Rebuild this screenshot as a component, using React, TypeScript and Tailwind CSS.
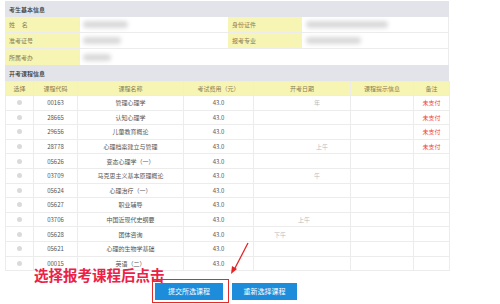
import React from 'react';

const courses = [
  { code: '00163', name: '管理心理学', date: '年', dx: 'ml-[60px]', note: true },
  { code: '28665', name: '认知心理学', date: '', dx: '', note: true },
  { code: '29656', name: '儿童教育概论', date: '', dx: '', note: true },
  { code: '28778', name: '心理档案建立与管理', date: '上午', dx: 'ml-[62px]', note: true },
  { code: '05626', name: '变态心理学（一）', date: '', dx: '', note: false },
  { code: '03709', name: '马克思主义基本原理概论', date: '午', dx: 'ml-[60px]', note: false },
  { code: '05624', name: '心理治疗（一）', date: '', dx: '', note: false },
  { code: '05627', name: '职业辅导', date: '', dx: '', note: false },
  { code: '03706', name: '中国近现代史纲要', date: '上午', dx: 'ml-[44px]', note: false },
  { code: '05628', name: '团体咨询', date: '下午', dx: 'ml-[20px]', note: false },
  { code: '05621', name: '心理的生物学基础', date: '', dx: '', note: false },
  { code: '00015', name: '英语（二）', date: '', dx: '', note: false },
];

function Blur({ w }: { w: string }) {
  return <div className={`h-[7px] ${w} rounded-full bg-[#d9d9d9] blur-[2px]`} />;
}

export default function App() {
  const font = { fontFamily: '"Noto Sans CJK SC", "Noto Sans", sans-serif' };
  return (
    <div className="relative w-[500px] h-[304px] bg-white overflow-hidden text-[6px] text-[#555]" style={font}>
      <div className="ml-[5px] pt-[1px] w-[444px]">
        {/* 考生基本信息 */}
        <div className="h-[16px] bg-[#e2e4ea] flex items-center pl-[4px] text-[#333] font-medium">考生基本信息</div>
        <div className="grid grid-cols-[75px_148px_74px_147px] border-r border-[#ececec]">
          <div className="h-[16px] bg-[#f7f5b3] flex items-center pl-[4px] text-[#8a7d55] border-b border-[#ececec]">姓&nbsp;&nbsp;&nbsp;&nbsp;&nbsp;名</div>
          <div className="h-[16px] flex items-center pl-[3px] border-b border-[#ececec]"><Blur w="w-[45px]" /></div>
          <div className="h-[16px] bg-[#f7f5b3] flex items-center pl-[4px] text-[#8a7d55] border-b border-[#ececec]">身份证件</div>
          <div className="h-[16px] flex items-center pl-[4px] border-b border-[#ececec]"><Blur w="w-[82px]" /></div>
          <div className="h-[16px] bg-[#f7f5b3] flex items-center pl-[4px] text-[#8a7d55] border-b border-[#ececec]">准考证号</div>
          <div className="h-[16px] flex items-center pl-[3px] border-b border-[#ececec]"><Blur w="w-[38px]" /></div>
          <div className="h-[16px] bg-[#f7f5b3] flex items-center pl-[4px] text-[#8a7d55] border-b border-[#ececec]">报考专业</div>
          <div className="h-[16px] flex items-center pl-[4px] border-b border-[#ececec]"><Blur w="w-[55px]" /></div>
          <div className="h-[16px] bg-[#f7f5b3] flex items-center pl-[4px] text-[#8a7d55]">所属考办</div>
          <div className="h-[16px] flex items-center pl-[3px]"><Blur w="w-[28px]" /></div>
          <div className="h-[16px]" />
          <div className="h-[16px]" />
        </div>

        {/* 开考课程信息 */}
        <div className="h-[16px] bg-[#e2e4ea] flex items-center pl-[4px] text-[#333] font-medium">开考课程信息</div>
        <table className="w-[444px] table-fixed border-collapse text-center">
          <colgroup>
            <col className="w-[28px]" />
            <col className="w-[44px]" />
            <col className="w-[106px]" />
            <col className="w-[70px]" />
            <col className="w-[97px]" />
            <col className="w-[63px]" />
            <col className="w-[36px]" />
          </colgroup>
          <thead>
            <tr className="h-[14px] bg-[#f7f5b3] text-[#8a7d55]">
              <th className="font-normal border border-[#ececec]">选择</th>
              <th className="font-normal border border-[#ececec]">课程代码</th>
              <th className="font-normal border border-[#ececec]">课程名称</th>
              <th className="font-normal border border-[#ececec]">考试费用（元）</th>
              <th className="font-normal border border-[#ececec]">开考日期</th>
              <th className="font-normal border border-[#ececec]">课程提示信息</th>
              <th className="font-normal border border-[#ececec]">备注</th>
            </tr>
          </thead>
          <tbody>
            {courses.map((c) => (
              <tr key={c.code} className="h-[14.6px]">
                <td className="border border-[#ececec]">
                  <div className="mx-auto w-[5px] h-[5px] rounded-full bg-[#dadada]" />
                </td>
                <td className="border border-[#ececec]">{c.code}</td>
                <td className="border border-[#ececec]">{c.name}</td>
                <td className="border border-[#ececec]">43.0</td>
                <td className="border border-[#ececec] text-left text-[#bbb]">
                  <span className={c.dx}>{c.date}</span>
                </td>
                <td className="border border-[#ececec]" />
                <td className="border border-[#ececec] text-[#f03c3c]">{c.note ? '未支付' : ''}</td>
              </tr>
            ))}
          </tbody>
        </table>

        <div className="flex gap-[9px] mt-[12px] ml-[150px]">
          <div className="w-[68px] h-[17px] bg-[#1d8ddb] text-white text-[7px] flex items-center justify-center">提交所选课程</div>
          <div className="w-[65px] h-[17px] bg-[#1d8ddb] text-white text-[7px] flex items-center justify-center">重新选择课程</div>
        </div>
      </div>

      {/* annotation */}
      <div className="absolute left-[34px] top-[268px] text-[14.5px] font-bold text-[#ec2146] leading-none">选择报考课程后点击</div>
      <div className="absolute left-[152px] top-[279px] w-[77px] h-[24px] border-[1.5px] border-[#e22b2b]" />
      <svg className="absolute left-0 top-0" width="500" height="304">
        <line x1="248" y1="243" x2="234" y2="270" stroke="#e42424" strokeWidth="1.3" />
        <polygon points="231,274 232,266 237,269" fill="#e42424" />
      </svg>
    </div>
  );
}
